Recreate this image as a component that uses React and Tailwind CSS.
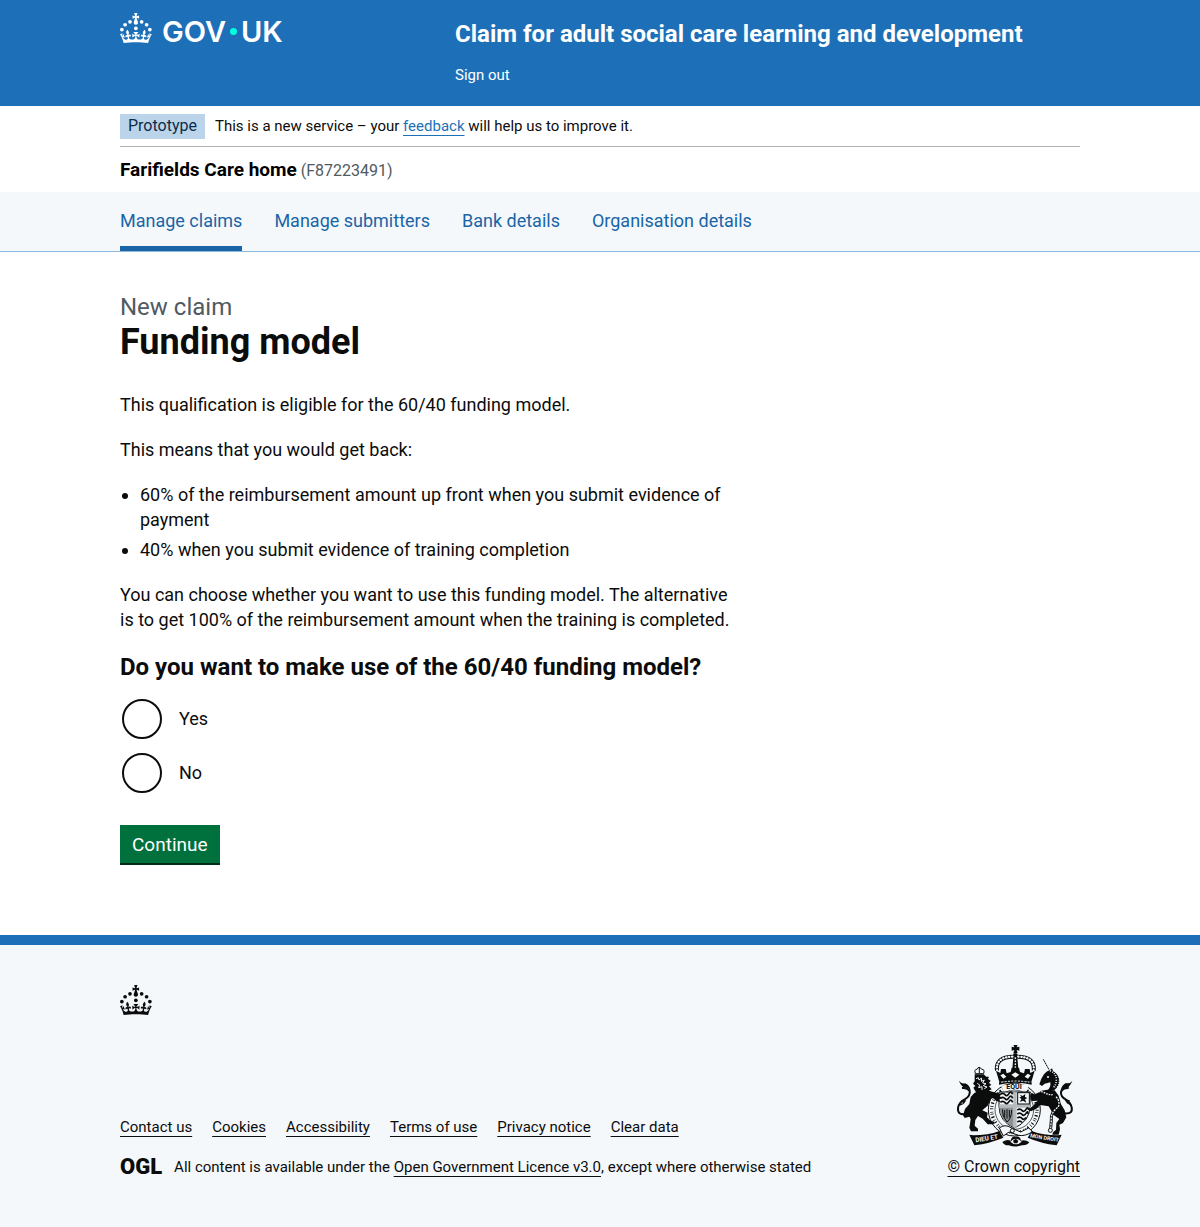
import React from "react";

const navItems = ["Manage claims", "Manage submitters", "Bank details", "Organisation details"];
const footerLinks = ["Contact us", "Cookies", "Accessibility", "Terms of use", "Privacy notice", "Clear data"];

const container = "mx-auto w-full max-w-[960px]";

function Crown() {
  return (
    <svg viewBox="0 0 64 60" className="h-[30px] w-8 shrink-0" fill="currentColor" aria-hidden="true">
      <circle cx="20" cy="17.6" r="3.7" />
      <circle cx="10.2" cy="23.5" r="3.7" />
      <circle cx="3.7" cy="33.2" r="3.7" />
      <circle cx="31.7" cy="30.6" r="3.7" />
      <circle cx="43.3" cy="17.6" r="3.7" />
      <circle cx="53.2" cy="23.5" r="3.7" />
      <circle cx="59.7" cy="33.2" r="3.7" />
      <path d="M33.1,9.8c.2-.1.3-.3.5-.5l4.6,2.4v-6.8l-4.6,1.5c-.1-.2-.3-.3-.5-.5l1.9-5.9h-6.7l1.9,5.9c-.2.1-.3.3-.5.5l-4.6-1.5v6.8l4.6-2.4c.1.2.3.3.5.5l-2.6,8c-.9,2.8,1.2,5.7,4.1,5.7h0c3,0,5.1-2.9,4.1-5.7l-2.6-8ZM37,37.9s-3.4,3.8-4.1,6.1c2.2,0,4.2-.5,6.4-2.8l-.7,8.5c-2-2.8-4.4-4.1-5.7-3.8.1,3.1.5,6.7,5.8,7.2,3.7.3,6.7-1.5,7-3.8.4-2.6-2-4.3-3.7-1.6-1.4-4.5,2.4-6.1,4.9-3.2-1.9-4.5-1.8-7.7,2.4-10.9,3,4,2.6,7.3-1.2,11.1,2.4-1.3,6.2,0,4,4.6-1.2-2.8-3.7-2.2-4.2.2-.3,1.7.7,3.7,3,4.2,1.9.3,4.7-.9,7-5.9-1.3,0-2.4.7-3.9,1.7l2.4-8c.6,2.3,1.4,3.7,2.2,4.5.6-1.6.5-2.8,0-5.3l5,1.8c-2.6,3.6-5.2,8.7-7.3,17.5-7.4-1.1-15.7-1.7-24.5-1.7h0c-8.8,0-17.1.6-24.5,1.7-2.1-8.9-4.7-13.9-7.3-17.5l5-1.8c-.5,2.5-.6,3.7,0,5.3.8-.8,1.6-2.3,2.2-4.5l2.4,8c-1.5-1-2.6-1.7-3.9-1.7,2.3,5,5.2,6.2,7,5.9,2.3-.4,3.3-2.4,3-4.2-.5-2.4-3-3.1-4.2-.2-2.2-4.6,1.6-6,4-4.6-3.7-3.7-4.2-7.1-1.2-11.1,4.2,3.2,4.3,6.4,2.4,10.9,2.5-2.8,6.3-1.3,4.9,3.2-1.8-2.7-4.1-1-3.7,1.6.3,2.3,3.3,4.1,7,3.8,5.4-.5,5.7-4.2,5.8-7.2-1.3-.2-3.7,1-5.7,3.8l-.7-8.5c2.2,2.3,4.2,2.7,6.4,2.8-.7-2.3-4.1-6.1-4.1-6.1h10.6Z" />
    </svg>
  );
}

function RoyalArms() {
  const ink = "#0b0c0c";
  const paper = "#f4f8fb";
  return (
    <svg viewBox="42 31 360 309" className="h-[103px] w-[120px]" fill={ink} aria-hidden="true">
      {/* garter and shield */}
      <ellipse cx="223" cy="225" rx="78" ry="79" fill={paper} stroke={ink} strokeWidth="3" />
      <ellipse cx="223" cy="225" rx="68" ry="69" fill="none" stroke={ink} strokeWidth="10" strokeDasharray="3 5 2 7 4 6 2 4 2 8" />
      <ellipse cx="223" cy="225" rx="58" ry="59" fill={paper} stroke={ink} strokeWidth="2" />
      <path d="M177 172H270V214Q270 260 223 280Q177 260 177 214Z" fill={paper} stroke={ink} strokeWidth="3" />
      <path d="M178 217H221V277Q181 260 178 217Z" fill="#8c9092" />
      <path d="M225 173V279M178 214H270" stroke="#b6babc" strokeWidth="10" />
      <path d="M181 179q8-6 14 1t12-3 11 2M181 191q8-6 14 1t12-3 11 2M181 203q8-6 14 1t12-3 11 2M232 226q8-6 14 1t12-3 8 2M232 238q8-6 14 1t12-3 6 2M232 250q8-6 14 1t12-3M232 262q8-6 14 1" fill="none" stroke={ink} strokeWidth="5" />
      <rect x="233" y="174" width="35" height="34" fill={paper} stroke={ink} strokeWidth="3" />
      <path d="M240 180l8 4 8-6-1 9 7 3-7 4 4 10-10-6-9 4 4-9-6-5 6-1z" />
      <path d="M187 224q-1 22 14 38q14-12 14-36M194 226v22M201 224v28M208 226v22" fill="none" stroke={ink} strokeWidth="3" />
      {/* crown */}
      <path d="M220 30h13l-3 8 8-2v12l-8-2 3 9h-13l3-9-8 2V36l8 2z" />
      <circle cx="226" cy="62" r="7" />
      <path d="M171 108Q166 66 220 66M281 108Q286 66 232 66" fill="none" stroke={ink} strokeWidth="12" />
      <path d="M171 108Q166 66 220 66M281 108Q286 66 232 66" fill="none" stroke={paper} strokeWidth="7" strokeLinecap="round" strokeDasharray="1 8" />
      <path d="M220 66h12l3 38h-18z" />
      <path d="M226 70v30" stroke={paper} strokeWidth="5" strokeLinecap="round" strokeDasharray="1 8" />
      <path d="M168 108l13 7 2-12h14l3 13 12-4 3-13h22l3 13 12 4 3-13h14l2 12 13-7-10 34Q226 136 178 142z" />
      <path d="M181 122l9-5 9 9-9 6zM214 120l12-7 12 7-12 9zM254 126l9-9 9 5-8 10z" fill={paper} />
      <path d="M177 143Q226 132 275 143V150Q226 139 177 150z" />
      <path d="M184 143Q226 135 268 143" fill="none" stroke={paper} strokeWidth="3" strokeDasharray="6 4" />
      <path d="M184 153Q226 141 266 153L260 169Q226 160 190 169z" fill={paper} />
      <text x="199" y="164" fontSize="21" fontWeight="700" fontFamily="Roboto, sans-serif">EQUI</text>
      {/* lion */}
      <path d="M106 117q-4-14 5-13 6-12 14 0 10-1 6 13z" fill={paper} stroke={ink} strokeWidth="3" />
      <path d="M118 97v18" stroke={ink} strokeWidth="3" />
      <path d="M104 119h27l8 7 8 0-3 7 8 5-5 6 7 7-7 4 8 9-8 4 24 7 13 4-5 6 9 6-11 3 4 8-12-3-10-9-6 2-10 21-16 14 16 7-2 14 11 10 11 3-2 8h-18l-15-17-14-8-8 12-2 17 10 9 0 8h-21l-5-11 2-12 2-14-4-7-14 4-5-8 6-19 13-15 4-21 11-12 5-2-8-14 6-5-7-7 5-7z" />
      <path d="M108 132l7-3 2 7 8-6-1 10 9-4-5 9 10 2-8 6 11 4-8 5M112 146l7 5-3 8 10-3 0 10" fill="none" stroke={paper} strokeWidth="3" />
      <path d="M77 238Q52 242 54 220Q57 202 74 194Q92 184 89 169Q83 158 66 160" fill="none" stroke={ink} strokeWidth="6" />
      <path d="M57 138q8 11 18 8 14 4 17 22-10-12-19-9-11-6-16-21zM57 214q3-11 13-7l-7-10 16 0-8 11z" />
      {/* unicorn */}
      <path d="M310 74l17 31" stroke={ink} strokeWidth="3" strokeDasharray="5 1" />
      <path d="M304 132q10-21 25-25l7-6 3 8q19 11 19 30-1 18-15 27l-21 2q11-10 9-25l-17 4-8 7-8-5z" />
      <path d="M330 108q20 8 19 29 0 15-11 23" fill="none" stroke={paper} strokeWidth="5" strokeDasharray="3 4" />
      <path d="M340 106q19 10 18 33-1 14-10 22" fill="none" stroke={paper} strokeWidth="4" strokeDasharray="3 4" />
      <circle cx="324" cy="127" r="3" fill={paper} />
      <path d="M322 165l22 2 12 16 5 22 13 22 5 21-10 17-11 5 2 14-4 16h-19l2-7 9-8 1-20 9-12-17-12-15-26-25-4-12 11-16 8-8-5 16-13 12-14-18 1-5-13 4-11 10 4 10-5 10-6z" />
      <path d="M288 174q14-7 25 0t25 6" fill="none" stroke={paper} strokeWidth="4" strokeDasharray="5 3" />
      <path d="M348 186q13 13 7 31-24 17-21 39l-2 25" fill="none" stroke={ink} strokeWidth="9" />
      <path d="M348 186q13 13 7 31-24 17-21 39l-2 25" fill="none" stroke={paper} strokeWidth="4" strokeDasharray="6 3" />
      <circle cx="331" cy="287" r="6" fill={paper} stroke={ink} strokeWidth="3" />
      <path d="M375 236Q399 238 395 218Q391 203 378 195Q361 186 363 171Q371 158 386 160" fill="none" stroke={ink} strokeWidth="6" />
      <path d="M397 138q-8 11-19 7-13 6-17 24 11-12 20-9 10-6 16-22zM396 213q-3-11-13-7l7-10-16 0 8 11z" />
      {/* motto ribbon and plinth */}
      <path d="M178 280Q195 267 213 279L242 292 266 280 278 291Q254 306 236 302L207 292 190 304z" fill={paper} stroke={ink} strokeWidth="3" />
      <circle cx="217" cy="288" r="6" fill={paper} stroke={ink} strokeWidth="3" />
      <path d="M88 300l12 2q44 0 78-13l12 20q-40 17-87 23z" />
      <path d="M365 300l-12 2q-44 0-78-13l-12 20q40 17 87 23z" />
      <text x="107" y="323" fontSize="19" fontWeight="700" fill={paper} fontFamily="Roboto, sans-serif" transform="rotate(-9 107 323)">DIEU ET</text>
      <text x="270" y="308" fontSize="16" fontWeight="700" fill={paper} fontFamily="Roboto, sans-serif" transform="rotate(9 270 308)">MON DROIT</text>
      <path d="M187 322q14-9 25-4 3-14 15-12 14-2 16 12 13-4 25 5-7 10-22 9-19 7-40 0-13 1-19-10z" />
      <path d="M211 321q16-17 34 0-17 16-34 0z" fill={paper} />
      <path d="M219 318l8-6 8 6-3 8h-10z" />
    </svg>
  );
}

function Radio({ id, label }) {
  return (
    <div className="flex items-center gap-[17px] pl-0.5">
      <input
        id={id}
        type="radio"
        name="funding-model"
        value={label}
        className="my-0.5 size-10 shrink-0 appearance-none rounded-full border-2 border-[#0b0c0c] bg-white checked:bg-[radial-gradient(#0b0c0c_10px,transparent_11px)]"
      />
      <label htmlFor={id} className="pb-0.5">{label}</label>
    </div>
  );
}

const footerLink = "underline decoration-1 underline-offset-4";

export default function App() {
  return (
    <div className="flex min-h-screen flex-col bg-white font-[Roboto,Arial,sans-serif] text-lg leading-[25px] text-[#0b0c0c]">
      <header className="bg-[#1d70b8] px-4 text-white">
        <div className={`${container} flex min-h-[106px]`}>
          <div className="w-[335px] shrink-0 pt-[13px]">
            <a href="#" aria-label="GOV.UK" className="inline-flex h-[30px] items-center">
              <Crown />
              <span className="ml-2.5 flex items-center gap-1 pt-2 font-[Inter,sans-serif] text-[29px] leading-[30px] font-semibold">
                GOV
                <span className="mb-0.5 size-[7px] rounded-full bg-[#00ffe0]" />
                UK
              </span>
            </a>
          </div>
          <div className="pt-[19px]">
            <a href="#" className="block text-2xl leading-[30px] font-bold">
              Claim for adult social care learning and development
            </a>
            <nav aria-label="Account" className="pt-4 text-[15px] leading-5">
              <a href="#">Sign out</a>
            </nav>
          </div>
        </div>
      </header>

      <div className="px-4">
        <div className={`${container} flex items-start gap-2.5 border-b border-[#b1b4b6] pt-2 pb-[7px] text-[15px] leading-6`}>
          <strong className="h-[25px] bg-[#bbd4ea] px-2 text-base leading-6 font-normal text-[#0c2d4a]">Prototype</strong>
          <span>
            This is a new service – your{" "}
            <a href="#" className="text-[#1d70b8] underline decoration-1 underline-offset-4">feedback</a> will help us to improve it.
          </span>
        </div>
        <div className={`${container} flex items-baseline gap-1 py-2.5`}>
          <strong className="text-[19px] leading-[25px] text-black">Farifields Care home</strong>
          <span className="text-base leading-5 text-[#505a5f]">(F87223491)</span>
        </div>
      </div>

      <nav aria-label="Service" className="border-b border-[#8eb8dc] bg-[#f4f8fb] px-4">
        <ul className={`${container} flex flex-wrap gap-x-8`}>
          {navItems.map((item, i) => (
            <li key={item}>
              <a
                href="#"
                aria-current={i === 0 ? "page" : undefined}
                className="block border-b-[5px] border-transparent pt-4 pb-[13px] text-[#1a65a6] aria-[current=page]:border-[#1a65a6]"
              >
                {item}
              </a>
            </li>
          ))}
        </ul>
      </nav>

      <main className="grow px-4 pt-10 pb-[70px]">
        <div className={container}>
          <div className="max-w-[620px]">
            <span className="block text-2xl leading-[30px] text-[#505a5f]">New claim</span>
            <h1 className="mb-[30px] text-4xl leading-10 font-bold">Funding model</h1>
            <p className="mb-5">This qualification is eligible for the 60/40 funding model.</p>
            <p className="mb-5">This means that you would get back:</p>
            <ul className="mb-5 list-disc space-y-[5px] pl-5">
              <li>60% of the reimbursement amount up front when you submit evidence of payment</li>
              <li>40% when you submit evidence of training completion</li>
            </ul>
            <p className="mb-5">
              You can choose whether you want to use this funding model. The alternative is to get 100% of the reimbursement amount when the training is completed.
            </p>
            <form onSubmit={(e) => e.preventDefault()}>
              <fieldset>
                <legend className="mb-[15px] text-2xl leading-[30px] font-bold">
                  Do you want to make use of the 60/40 funding model?
                </legend>
                <div className="space-y-2.5">
                  <Radio id="funding-yes" label="Yes" />
                  <Radio id="funding-no" label="No" />
                </div>
              </fieldset>
              <button type="submit" className="mt-[30px] block border-b-2 border-[#002d18] bg-[#00703c] px-3 pt-[7px] pb-1.5 text-[19px] text-white">
                Continue
              </button>
            </form>
          </div>
        </div>
      </main>

      <footer className="border-t-[10px] border-[#1d70b8] bg-[#f4f8fb] px-4 pt-10 pb-[50px] text-[15px] leading-5">
        <div className={container}>
          <Crown />
          <div className="mt-[30px] flex items-end justify-between gap-8">
            <div>
              <ul className="mb-5 flex flex-wrap gap-x-5">
                {footerLinks.map((item) => (
                  <li key={item}>
                    <a href="#" className={footerLink}>{item}</a>
                  </li>
                ))}
              </ul>
              <div className="flex items-center gap-3">
                <span className="font-[Roboto,sans-serif] text-[22px] leading-5 font-black">OGL</span>
                <span>
                  All content is available under the{" "}
                  <a href="#" className={footerLink}>Open Government Licence v3.0</a>, except where otherwise stated
                </span>
              </div>
            </div>
            <a href="#" className="flex flex-col items-center gap-[9px]">
              <RoyalArms />
              <span className={`${footerLink} text-base leading-5`}>© Crown copyright</span>
            </a>
          </div>
        </div>
      </footer>
    </div>
  );
}
